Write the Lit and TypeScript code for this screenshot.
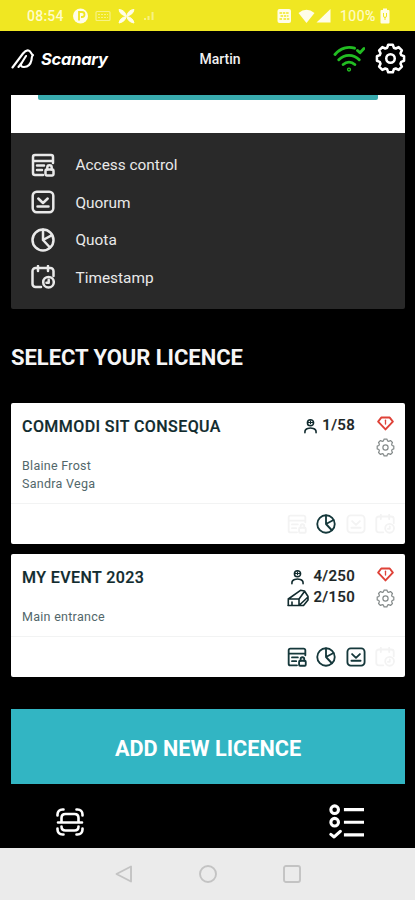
import { LitElement, html, css, svg } from "lit";
import { customElement, property } from "lit/decorators.js";
import { classMap } from "lit/directives/class-map.js";

const gearPath =
  "M10 2h4l.9 2.6 1.7.7 2.5-1.2 2.8 2.8-1.2 2.5.7 1.7 2.4.9v4l-2.4.9-.7 1.7 1.2 2.5-2.8 2.8-2.5-1.2-1.700.7L14 26h-4l-.9-2.600-1.700-.7-2.500 1.200-2.800-2.800 1.200-2.500-.7-1.700L.2 16v-4l2.400-.9.7-1.700L2.100 6.900l2.800-2.800 2.500 1.200 1.700-.7z";

const icons = {
  access: {
    box: "0 0 24 24",
    body: svg`<path d="M22 10V4a2 2 0 0 0-2-2H4a2 2 0 0 0-2 2v16a2 2 0 0 0 2 2h8M2 8h20M6 12.500h7M6 17h5"/><rect x="14.500" y="16.500" width="8" height="6" rx="1.200"/><path d="M16.300 16.500V14.500a2.200 2.200 0 0 1 4.400 0v2"/>`,
  },
  quorum: {
    box: "0 0 24 24",
    body: svg`<rect x="1.700" y="1.700" width="20.600" height="20.600" rx="4"/><path d="M7.300 8.500l4.700 4.500 4.700-4.500M6.500 16.500h11"/>`,
  },
  quota: {
    box: "0 0 24 24",
    body: svg`<circle cx="12" cy="12" r="10.500"/><path d="M12 1.700V12l7 7.500M12 12l9-4.800"/>`,
  },
  timestamp: {
    box: "0 0 24 24",
    body: svg`<path d="M10 22H4.500a3 3 0 0 1-3-3V6a3 3 0 0 1 3-3h15a3 3 0 0 1 3 3v5M7 1v5M17 1v5"/><circle cx="17.500" cy="17.200" r="5.300"/><path d="M17.700 14.800v3h-2.200"/>`,
  },
  gear: {
    box: "-1 0.500 26 27",
    body: svg`<path d=${gearPath}/><circle cx="12" cy="14" r="3.700"/>`,
  },
  gem: {
    box: "0 0 18 15",
    body: svg`<path d="M4.500 1.200h9l3.300 4.300L9 13.800 1.200 5.500z"/><path stroke-width="1.400" d="M9 4v4"/>`,
  },
  person: {
    box: "0 0 14 16",
    body: svg`<circle cx="7" cy="4.500" r="3.300"/><path stroke-width="1.200" d="M4.500 4.300h5M7 2.500v3"/><path d="M1 15.200v-1c0-2 1.300-3.200 3-3.600 2-.5 4-.5 6 0 1.700.4 3 1.600 3 3.600v1"/>`,
  },
  vehicle: {
    box: "0 0 22 18",
    body: svg`<path d="M1 16.500h15.500L21 11V7.500L17.500 2l-4-.7L1.300 10H12l5.500-7.500M1.300 10.500v6M12 16v-6M5 13v3M12.500 16L21 8"/>`,
  },
  wifi: {
    box: "0 0 32 27",
    body: svg`<path d="M2 9.500C7.500 3.200 15 1.200 21.500 3.200M5.800 14.700c5.800-5.800 14.600-5.800 20.400 0M10.200 19.500c3.400-3 8.200-3 11.600 0"/><path d="M24.500 5.500l2.500 2.300 4-4.300"/><circle cx="16" cy="24.600" r=".7"/>`,
  },
  brand: {
    box: "0 0 24 20",
    body: svg`<path d="M1.500 18.500L12 4.500C14 1.800 16.500.8 18.300 1.800c1.500.8 1.400 2.600 3.700 4.400-1.500.7-1 2.300-1.500 4.800-.8 4-3.600 6.800-7.500 7-2.500.1-3.700-1.300-2.700-3.500L15 7M7.500 18l3.500-4.500"/>`,
  },
  scan: {
    box: "0 0 28 28",
    body: svg`<path d="M1.500 7.500V6.500c0-3 2-5 5-5h1M20.500 1.500h1c3 0 5 2 5 5v1M26.500 20.500v1c0 3-2 5-5 5h-1M7.500 26.500h-1c-3 0-5-2-5-5v-1M2 14.500h24M5.500 13.500V10c0-2.500 1.500-4 4-4h9c2.500 0 4 1.500 4 4v3.500M5.500 18.500c0 2.500 1.500 4 4 4h9c2.500 0 4-1.500 4-4"/>`,
  },
  tasks: {
    box: "0 0 34 34",
    body: svg`<circle cx="5.500" cy="5.500" r="3.700"/><circle cx="5.500" cy="17.700" r="3.700"/><path d="M1.800 29.500l3.200 2.500 6-5.500"/><path stroke-linecap="butt" d="M14.500 5.500h19.500M14.500 17.700h19.500M14.500 30h19.500"/>`,
  },
  back: { box: "0 0 18 18", body: svg`<path d="M16 1.500v15L1.500 9z"/>` },
  home: { box: "0 0 18 18", body: svg`<circle cx="9" cy="9" r="8"/>` },
  recent: { box: "0 0 18 18", body: svg`<rect x="1" y="1" width="16" height="16" rx="2"/>` },
};

type IconName = keyof typeof icons;

@customElement("line-icon")
class LineIcon extends LitElement {
  static styles = css`
    :host { display: block; flex: none; }
    .glyph {
      display: block;
      width: 100%;
      height: 100%;
      fill: none;
      stroke: currentColor;
      stroke-width: var(--stroke, 2);
      stroke-linecap: round;
      stroke-linejoin: round;
    }
  `;
  @property() name: IconName = "quota";
  render() {
    const icon = icons[this.name];
    return html`<svg class="glyph" viewBox=${icon.box}>${icon.body}</svg>`;
  }
}

@customElement("status-bar")
class StatusBar extends LitElement {
  static styles = css`
    :host {
      display: flex;
      justify-content: space-between;
      align-items: center;
      height: 31px;
      box-sizing: border-box;
      padding: 1px 25px 0 27px;
      background: #f0e722;
      color: #fffcc8;
      font: 500 14px/1 Roboto, sans-serif;
    }
    .side { display: flex; align-items: center; }
    .time { width: 46px; font-size: 14px; letter-spacing: 0.250px; }
    .art { display: block; flex: none; }
    .soft { opacity: 0.500; }
    .percent { width: 40px; font-weight: 400; letter-spacing: 0.450px; -webkit-text-stroke: 0.200px; }
  `;
  render() {
    return html`
      <div class="side">
        <span class="time">08:54</span>
        <svg class="art" width="82" height="18" viewBox="0 0 82 18">
          <circle cx="7.500" cy="9" r="7.500" fill="#fffde8" />
          <path d="M6 13.500V5h3a2.500 2.500 0 0 1 0 5H8" fill="none" stroke="#f0e722" stroke-width="1.800" />
          <g class="soft" fill="none" stroke="#fffde8" stroke-width="1.200">
            <rect x="23" y="4.500" width="14" height="9" rx="1" />
            <path d="M25 7.500h10M25 10.500h10" stroke-dasharray="2 1" />
          </g>
          <path d="M46 2.500Q52 3 53.200 9 47 8 46 2.500zM61 2.500Q60 8 53.800 9 55 3 61 2.500zM46 16Q47 10.500 53.200 9.500 52 15 46 16zM61 16Q55 15 53.800 9.500 60 10.500 61 16z" fill="#fffde8" stroke="#fffde8" />
          <path class="soft" d="M72 13v-2M75.500 13V9M79.500 13V5" stroke="#fffde8" stroke-width="2" />
        </svg>
      </div>
      <div class="side">
        <svg class="art" width="63" height="18" viewBox="0 0 62 18">
          <rect x="0" y="2" width="13.500" height="14" rx="2" fill="#fffde8" />
          <path d="M2 6h9.500M3 9h8M2 12h3M6 12h6" stroke="#f0e722" stroke-width="1.400" stroke-dasharray="2.500 .8" />
          <path d="M21 6Q29-.5 37 6L29 16z" fill="#fffde8" />
          <path d="M39 15.500L53 2v13.500z" fill="#fffde8" />
        </svg>
        <span class="percent">100%</span>
        <svg class="art" width="10" height="16" viewBox="0 0 10 16">
          <path d="M3 .5h4V2h1.500q1 0 1 1v11.500q0 1-1 1h-7q-1 0-1-1V3q0-1 1-1H3z" fill="#fffde8" />
          <path d="M3.500 5v3q0 1.500 1.500 1.500T6.500 8V5M5 9v3" fill="none" stroke="#f0e722" />
        </svg>
      </div>
    `;
  }
}

interface Licence {
  title: string;
  lines: string[];
  counts: { icon: IconName; value: string }[];
  enabled: IconName[];
}

const features: { icon: IconName; label: string }[] = [
  { icon: "access", label: "Access control" },
  { icon: "quorum", label: "Quorum" },
  { icon: "quota", label: "Quota" },
  { icon: "timestamp", label: "Timestamp" },
];

const licences: Licence[] = [
  {
    title: "COMMODI SIT CONSEQUA",
    lines: ["Blaine Frost", "Sandra Vega"],
    counts: [{ icon: "person", value: "1/58" }],
    enabled: ["quota"],
  },
  {
    title: "MY EVENT 2023",
    lines: ["Main entrance"],
    counts: [
      { icon: "person", value: "4/250" },
      { icon: "vehicle", value: "2/150" },
    ],
    enabled: ["access", "quota", "quorum"],
  },
];

@customElement("licence-card")
class LicenceCard extends LitElement {
  static styles = css`
    :host {
      display: block;
      background: #fff;
      border-radius: 2px;
      color: #112b2e;
      font-family: Roboto, sans-serif;
    }
    .top {
      display: flex;
      box-sizing: border-box;
      padding: 12px 10px 10px 11px;
      border-bottom: 1px solid #f2f3f3;
    }
    .info { flex: 1; }
    .title { padding-top: 1px; font-size: 16px; line-height: 22px; font-weight: 500; letter-spacing: 0.430px; -webkit-text-stroke: 0.200px; }
    .lines { margin-top: 19px; font-size: 12.500px; line-height: 18px; color: #52676a; letter-spacing: 0.280px; }
    .counts { display: grid; grid-template-columns: auto auto; align-content: start; justify-items: center; column-gap: 5px; }
    .value { justify-self: end; color: #1c2526; font-size: 15px; line-height: 21px; font-weight: 500; letter-spacing: 0.300px; -webkit-text-stroke: 0.200px; }
    .person { width: 13px; height: 16px; align-self: center; --stroke: 1.700; }
    .vehicle { width: 22px; height: 18px; align-self: center; --stroke: 1.600; }
    .state { display: flex; flex-direction: column; align-items: center; width: 20px; margin-left: 20px; }
    .gem { width: 17px; height: 15px; margin-top: 0.500px; color: #df4238; --stroke: 2; }
    .gear { width: 19px; height: 19px; margin-top: 7.500px; color: #858b8b; --stroke: 1.700; }
    .modes { display: flex; justify-content: flex-end; align-items: center; gap: 9.400px; height: 39.500px; padding-right: 10px; }
    .mode { width: 20px; height: 20px; color: #f3f3f3; --stroke: 2.200; }
    .on { color: #15383b; }
  `;
  @property({ attribute: false }) licence!: Licence;
  render() {
    const l = this.licence;
    return html`
      <div class="top">
        <div class="info">
          <div class="title">${l.title}</div>
          <div class="lines">${l.lines.map((t) => html`<div>${t}</div>`)}</div>
        </div>
        <div class="counts">
          ${l.counts.map((c) => html`<line-icon class=${c.icon} .name=${c.icon}></line-icon><span class="value">${c.value}</span>`)}
        </div>
        <div class="state">
          <line-icon class="gem" .name=${"gem"}></line-icon>
          <line-icon class="gear" .name=${"gear"}></line-icon>
        </div>
      </div>
      <div class="modes">
        ${(["access", "quota", "quorum", "timestamp"] as IconName[]).map(
          (m) => html`<line-icon class=${classMap({ mode: true, on: l.enabled.includes(m) })} .name=${m}></line-icon>`
        )}
      </div>
    `;
  }
}

@customElement("app-root")
class AppRoot extends LitElement {
  static styles = css`
    :host {
      display: flex;
      flex-direction: column;
      height: 900px;
      overflow: hidden;
      background: #000;
      color: #fff;
      font-family: Roboto, sans-serif;
    }
    .header { display: grid; grid-template-columns: 1fr auto 1fr; align-items: center; height: 55px; padding: 0 9px 0 11px; }
    .brand { display: flex; align-items: center; gap: 6px; }
    .mark { width: 24px; height: 20px; --stroke: 2.100; }
    .name { font: italic 700 16.500px/20px Inter, sans-serif; font-feature-settings: "cv11"; letter-spacing: -0.250px; }
    .user { font-size: 14px; font-weight: 500; letter-spacing: -0.050px; padding-top: 1px; margin-left: 23px; color: #f0f0f0; }
    .tools { display: flex; justify-content: flex-end; align-items: center; gap: 10px; }
    .wifi { width: 32px; height: 27px; color: #22bd22; --stroke: 2.900; }
    .settings { width: 31px; height: 31px; --stroke: 2.200; }
    .content { flex: 1; padding: 9px 10px 0 11px; }
    .sheet { height: 37.500px; background: #fff; padding: 0 27px; }
    .edge { height: 5px; background: #38aaae; border-radius: 0 0 2px 2px; }
    .features { box-sizing: border-box; background: #292929; padding-top: 13.500px; height: 176.500px; border-radius: 0 0 2px 2px; }
    .feature { display: flex; align-items: center; gap: 20.500px; height: 37.500px; padding-left: 20px; font-size: 15.400px; color: #e9e9e9; }
    .badge { width: 24px; height: 24px; --stroke: 2.500; }
    .label { padding-top: 1px; }
    .heading { margin: 35px 0 0; font-size: 22px; line-height: 28px; font-weight: 700; letter-spacing: -0.050px; color: #f6f6f6; }
    .list { display: flex; flex-direction: column; gap: 10.500px; margin-top: 31px; }
    .add {
      display: block; width: 100%; height: 75.500px; margin-top: 32px; padding: 5px 0 0; border: 0;
      background: #32b5c3; color: #fff; font: 700 21.700px/1 Roboto, sans-serif;
    }
    .tabs { display: flex; justify-content: space-between; box-sizing: border-box; padding: 10px 51px 0 56px; align-items: center; height: 63px; }
    .scan { width: 28px; height: 28px; --stroke: 2.600; }
    .tasks { width: 35px; height: 35px; --stroke: 3; }
    .system { display: flex; justify-content: center; align-items: center; gap: 66px; height: 52px; background: #ebebeb; color: #c3c3c3; }
    .key { width: 18px; height: 18px; --stroke: 1.900; }
  `;
  render() {
    return html`
      <status-bar></status-bar>
      <header class="header">
        <div class="brand">
          <line-icon class="mark" .name=${"brand"}></line-icon>
          <span class="name">Scanary</span>
        </div>
        <span class="user">Martin</span>
        <div class="tools">
          <line-icon class="wifi" .name=${"wifi"}></line-icon>
          <line-icon class="settings" .name=${"gear"}></line-icon>
        </div>
      </header>
      <main class="content">
        <div class="sheet"><div class="edge"></div></div>
        <section class="features">
          ${features.map(
            (f) => html`<div class="feature"><line-icon class="badge" .name=${f.icon}></line-icon><span class="label">${f.label}</span></div>`
          )}
        </section>
        <h1 class="heading">SELECT YOUR LICENCE</h1>
        <div class="list">
          ${licences.map((l) => html`<licence-card .licence=${l}></licence-card>`)}
        </div>
        <button class="add">ADD NEW LICENCE</button>
      </main>
      <nav class="tabs">
        <line-icon class="scan" .name=${"scan"}></line-icon>
        <line-icon class="tasks" .name=${"tasks"}></line-icon>
      </nav>
      <footer class="system">
        <line-icon class="key" .name=${"back"}></line-icon>
        <line-icon class="key" .name=${"home"}></line-icon>
        <line-icon class="key" .name=${"recent"}></line-icon>
      </footer>
    `;
  }
}
